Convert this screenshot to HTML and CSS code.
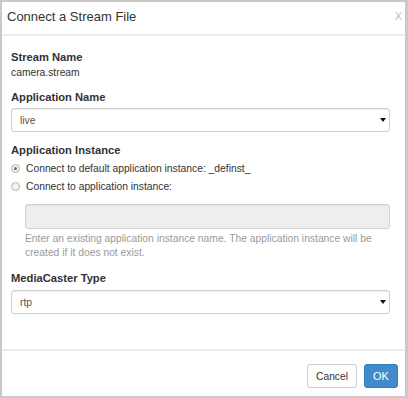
FILE: index.html
```html
<!DOCTYPE html>
<html>
<head>
<meta charset="utf-8">
<link rel="stylesheet" href="styles.css">
</head>
<body>
<div class="modal">
  <div class="modal-header">
    <h4 class="title">Connect a Stream File</h4>
    <span class="close">X</span>
  </div>
  <div class="modal-body">
    <div class="label">Stream Name</div>
    <div class="value">camera.stream</div>

    <div class="label gap">Application Name</div>
    <div class="select"><select><option>live</option></select></div>

    <div class="label gap-lg">Application Instance</div>
    <div class="radios">
      <div class="radio"><span class="dot checked"></span>Connect to default application instance: _definst_</div>
      <div class="radio"><span class="dot"></span>Connect to application instance:</div>
    </div>
    <input class="instance" type="text" disabled>
    <p class="help">Enter an existing application instance name. The application instance will be created if it does not exist.</p>

    <div class="label gap-lg">MediaCaster Type</div>
    <div class="select low"><select><option>rtp</option></select></div>
  </div>
  <div class="modal-footer">
    <button class="btn btn-default">Cancel</button>
    <button class="btn btn-primary">OK</button>
  </div>
</div>
</body>
</html>
```

FILE: styles.css
```css
html, body {
  margin: 0;
  padding: 0;
  background: #fff;
}

body {
  font-family: "Liberation Sans", Arial, sans-serif;
  color: #333;
}

.modal {
  box-sizing: border-box;
  width: 408px;
  height: 398px;
  border: 2px solid #c9c9c9;
  border-right-width: 3px;
  display: flex;
  flex-direction: column;
  background: #fff;
}

.modal-header {
  display: flex;
  justify-content: space-between;
  align-items: flex-start;
  padding: 6px 3px 8px 5px;
  border-bottom: 2px solid #ececec;
}

.title {
  margin: 0;
  font-size: 13px;
  font-weight: normal;
  line-height: 18px;
  color: #333;
}

.close {
  font-size: 11px;
  line-height: 12px;
  margin-top: 2px;
  color: #bdbdbd;
}

.modal-body {
  flex: 1;
  padding: 13px 15px 0 9px;
}

.label {
  font-size: 11.2px;
  font-weight: bold;
  line-height: 16px;
  color: #333;
}

.label.gap {
  margin-top: 8px;
}

.label.gap-lg {
  margin-top: 10px;
}

.value {
  font-size: 10.3px;
  line-height: 16px;
  color: #333;
}

.select {
  position: relative;
  margin-top: 3px;
}

.select.low {
  margin-top: 4px;
}

.select select {
  display: block;
  box-sizing: border-box;
  width: 100%;
  height: 24px;
  -webkit-appearance: none;
  appearance: none;
  border: 1px solid #cfcfcf;
  border-radius: 3px;
  background: #fff;
  box-shadow: inset 0 1px 1px rgba(0, 0, 0, 0.075);
  padding: 0 8px;
  font-family: "Liberation Sans", Arial, sans-serif;
  font-size: 10.3px;
  color: #555;
  outline: none;
}

.select::after {
  content: "";
  position: absolute;
  right: 4px;
  top: 10px;
  border-left: 3px solid transparent;
  border-right: 3px solid transparent;
  border-top: 4px solid #111;
}

.radios {
  margin-top: 1px;
}

.radio {
  display: flex;
  align-items: center;
  height: 18px;
  font-size: 10.3px;
  color: #333;
}

.dot {
  box-sizing: border-box;
  width: 9px;
  height: 9px;
  border-radius: 50%;
  border: 1px solid #b5b5b5;
  background: #f2f2f2;
  margin: 0 6px 0 0;
  display: flex;
  align-items: center;
  justify-content: center;
}

.dot.checked::before {
  content: "";
  width: 3px;
  height: 3px;
  border-radius: 50%;
  background: #666;
}

.instance {
  display: block;
  box-sizing: border-box;
  margin: 9px 0 0 14px;
  width: calc(100% - 14px);
  height: 25px;
  border: 1px solid #d2d2d2;
  border-radius: 3px;
  background: #eee;
  box-shadow: inset 0 1px 1px rgba(0, 0, 0, 0.05);
}

.help {
  margin: 3px 0 0 14px;
  font-size: 10.3px;
  line-height: 14px;
  color: #9a9a9a;
}

.modal-footer {
  display: flex;
  justify-content: flex-end;
  gap: 7px;
  padding: 13px 7px 8px 0;
  border-top: 2px solid #ececec;
}

.btn {
  box-sizing: border-box;
  height: 24px;
  border-radius: 3px;
  font-family: "Liberation Sans", Arial, sans-serif;
  font-size: 10.3px;
  padding: 0;
  cursor: pointer;
}

.btn-default {
  width: 50px;
  background: #fff;
  border: 1px solid #ccc;
  color: #333;
}

.btn-primary {
  width: 34px;
  background: #428bca;
  border: 1px solid #357ebd;
  color: #fff;
  font-size: 11px;
}
```
